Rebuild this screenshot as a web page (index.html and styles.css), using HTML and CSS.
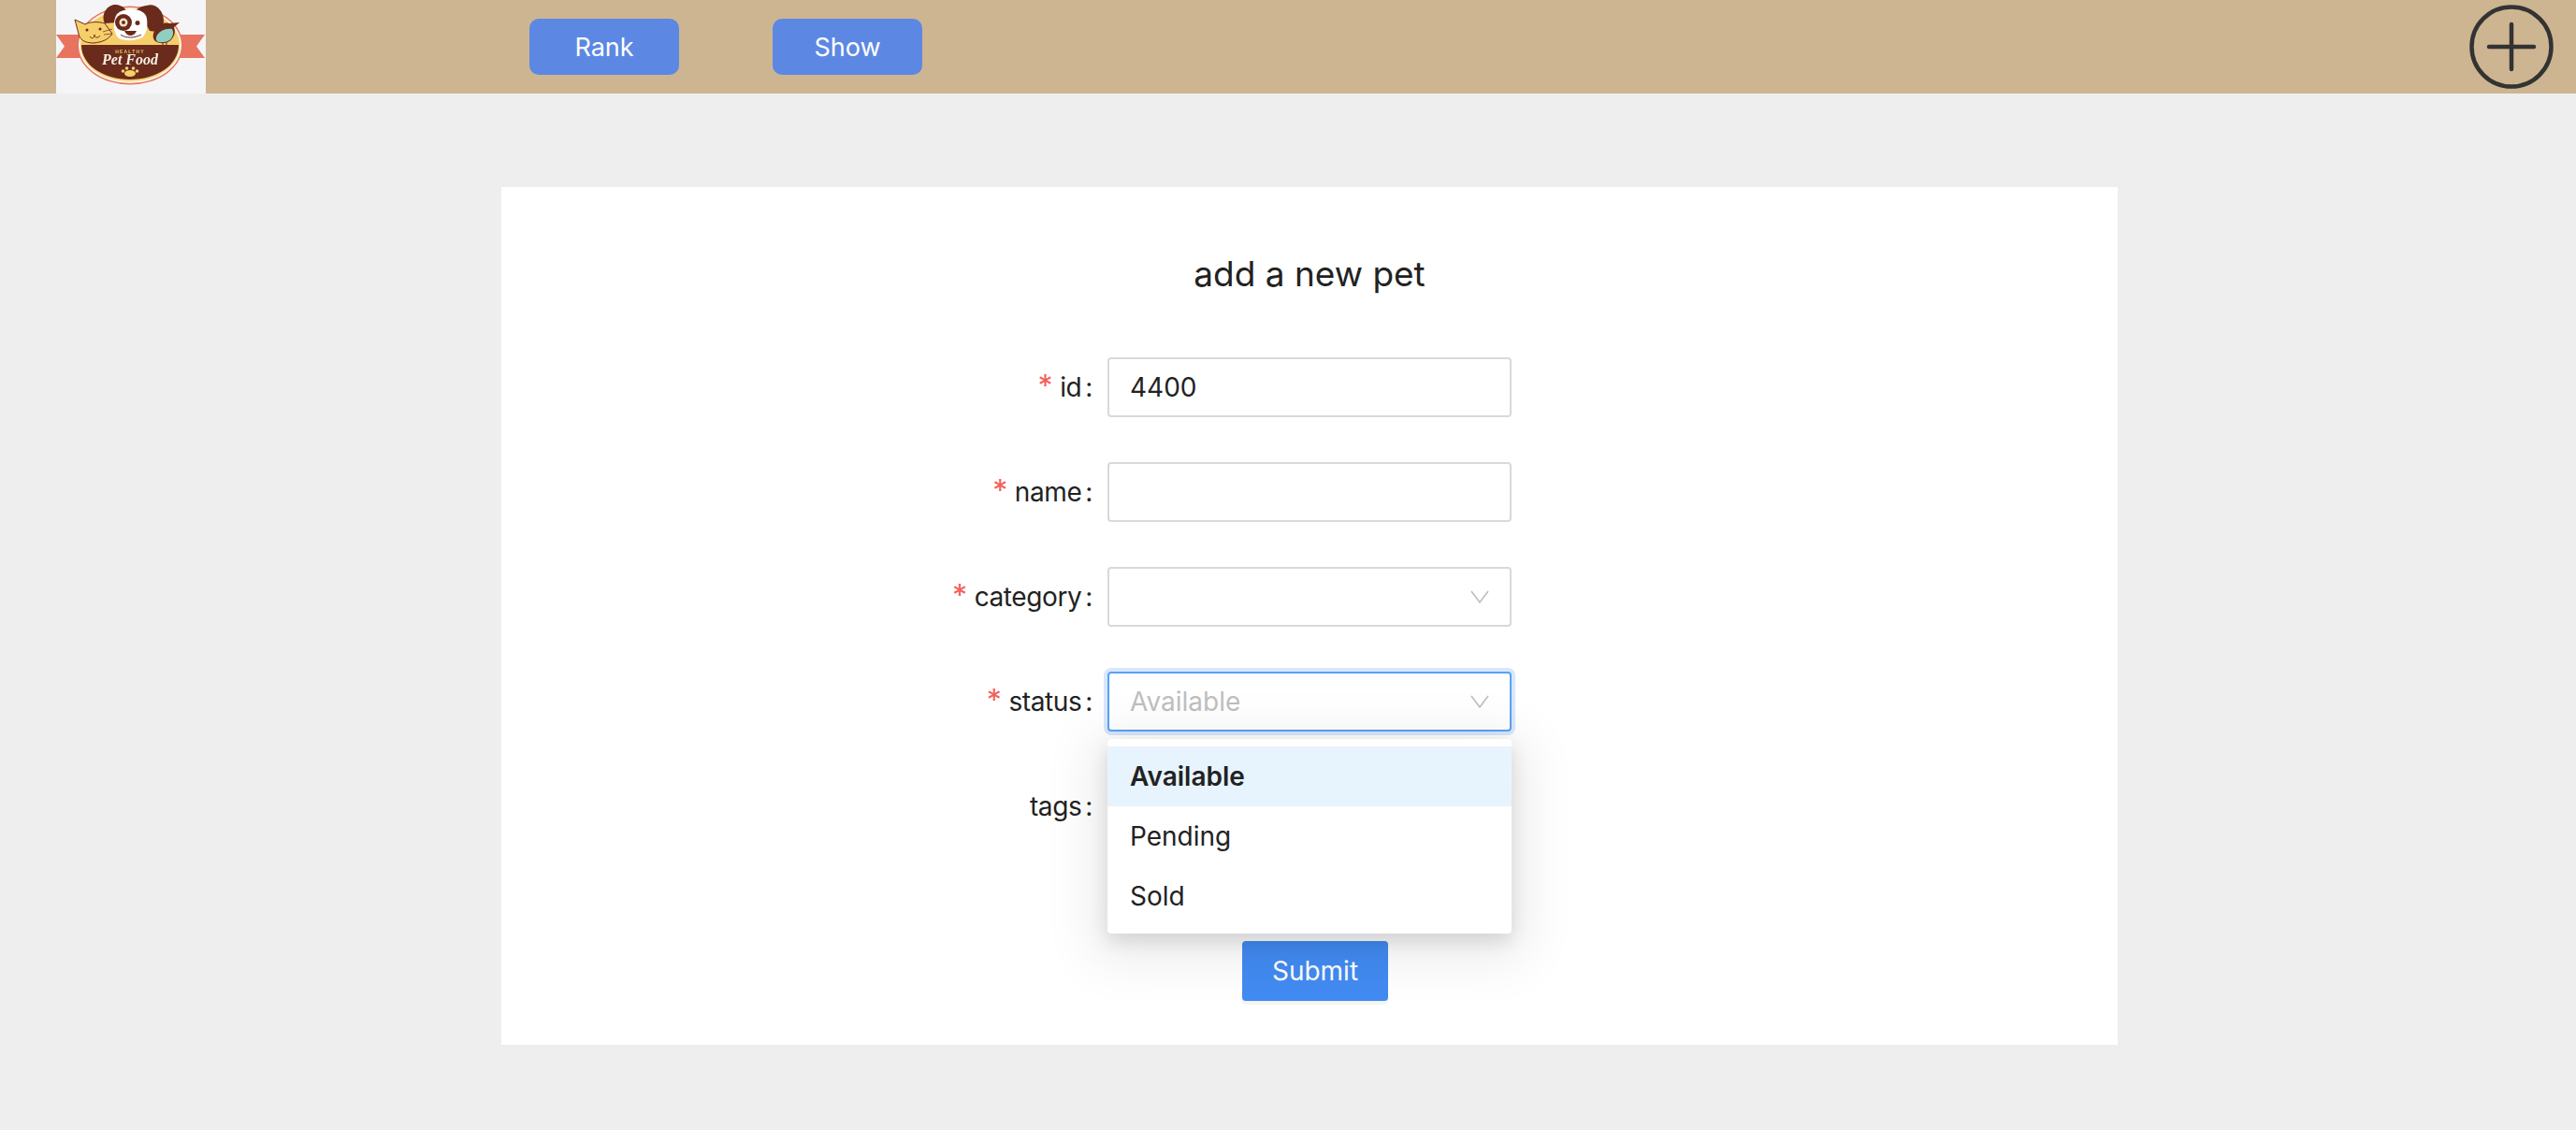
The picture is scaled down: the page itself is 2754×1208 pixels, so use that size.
FILE: index.html
```html
<!DOCTYPE html>
<html lang="en">
<head>
    <meta charset="UTF-8">
    <meta name="viewport" content="width=device-width, initial-scale=1.0">
    <title>Pet Store</title>
    <link rel="stylesheet" href="styles.css">
</head>
<body>
    <header class="top-bar">
        <svg class="logo" viewBox="0 0 160 100" aria-label="Healthy Pet Food">
            <defs>
                <filter id="soft"><feGaussianBlur stdDeviation="0.4"/></filter>
            </defs>
            <rect width="160" height="100" fill="#f5f5f7"/>
            <g filter="url(#soft)">
                <path d="M0 37H30V62H0L9 49.500Z" fill="#e8735f"/>
                <path d="M130 37H159L150 49.500L159 62H130Z" fill="#e8735f"/>
                <ellipse cx="79" cy="48.500" rx="56.500" ry="42" fill="#e8735f"/>
                <ellipse cx="79" cy="48.500" rx="55" ry="40.500" fill="#fbf3e3"/>
                <ellipse cx="79" cy="48.500" rx="53" ry="38.500" fill="#f5cf6b"/>
                <path d="M27 48H131C131 70 107 85 79 85C51 85 27 70 27 48Z" fill="#6b2c1b"/>
                <!-- dog -->
                <path d="M52 25C48 18 52 8 60 5.500C66 4 72 7 75 11L66 24Z" fill="#6b2c1b"/>
                <path d="M100 33C108 35 115 30 115 22C115 12 107 4 99 5.500C93 6 88 8 85 11L94 22Z" fill="#6b2c1b"/>
                <path d="M65 15C69 11 75 10 81 10C89 10 96 13 97 20C98 28 97 36 92 40C86 44 72 44 67 41C61 36 60 23 65 15Z" fill="#fff"/>
                <ellipse cx="72" cy="24" rx="9" ry="9" fill="#6b2c1b"/>
                <ellipse cx="72" cy="24" rx="4.500" ry="4.500" fill="#f2e3c6"/>
                <circle cx="72" cy="24" r="2" fill="#6b2c1b"/>
                <circle cx="87" cy="24.500" r="2.500" fill="#6b2c1b"/>
                <path d="M73 33H86C85 36 82 38 79.500 38C77 38 74 36 73 33Z" fill="#6b2c1b"/>
                <path d="M69 37C74 41 84 41 91 37" fill="none" stroke="#6b2c1b" stroke-width="1"/>
                <!-- cat -->
                <path d="M20 21L31 26C36 23 46 23 52 25L60 36C56 42 50 45 40 46C30 46 25 42 24 36Z" fill="#f5cf6b" stroke="#6b2c1b" stroke-width="1"/>
                <circle cx="33" cy="32" r="1.500" fill="#6b2c1b"/>
                <circle cx="47" cy="31" r="1.500" fill="#6b2c1b"/>
                <path d="M36 39C38 42 41 41 41 37C41 41 45 41 47 38" fill="none" stroke="#6b2c1b" stroke-width="1"/>
                <path d="M50 34L60 31M51 37L60 36" stroke="#6b2c1b" stroke-width="0.700"/>
                <!-- bird -->
                <path d="M104 36C106 28 113 23 121 25L132 24L126 29C129 36 124 45 116 46C109 47 102 44 104 36Z" fill="#6b2c1b"/>
                <path d="M107 40C109 33 118 30 124 31C127 36 124 44 116 45C111 46 106 45 107 40Z" fill="#8ecfc0"/>
                <path d="M114 45V48M118 45V48" stroke="#6b2c1b" stroke-width="1"/>
                <!-- label -->
                <text class="logo-small" x="79" y="56.500" text-anchor="middle">HEALTHY</text>
                <text class="logo-name" x="79" y="68.500" text-anchor="middle">Pet Food</text>
                <g fill="#f5cf6b">
                    <ellipse cx="79" cy="78.500" rx="6" ry="3.500"/>
                    <circle cx="71.500" cy="76" r="1.800"/>
                    <circle cx="75.500" cy="73" r="1.800"/>
                    <circle cx="82.500" cy="73" r="1.800"/>
                    <circle cx="86.500" cy="76" r="1.800"/>
                </g>
            </g>
        </svg>
        <nav class="nav-btns">
            <button class="nav-btn">Rank</button>
            <button class="nav-btn">Show</button>
        </nav>
        <svg class="add-icon" viewBox="0 0 90 90">
            <circle cx="45" cy="45" r="42.500" fill="none" stroke="#333" stroke-width="4.500"/>
            <path d="M45 21V69M21 45H69" fill="none" stroke="#333" stroke-width="4.500" stroke-linecap="round"/>
        </svg>
    </header>

    <main class="page">
        <section class="card">
            <h1 class="card-title">add a new pet</h1>
            <form class="pet-form">
                <div class="form-row">
                    <label class="form-label"><span class="required">*</span>id</label>
                    <div class="field"><span class="field-value">4400</span></div>
                </div>
                <div class="form-row">
                    <label class="form-label"><span class="required">*</span>name</label>
                    <div class="field"></div>
                </div>
                <div class="form-row">
                    <label class="form-label"><span class="required">*</span>category</label>
                    <div class="field">
                        <svg class="chevron" viewBox="0 0 20 20"><path d="M1 4L10 16L19 4" fill="none" stroke="#bdbdbd" stroke-width="1.600"/></svg>
                    </div>
                </div>
                <div class="form-row">
                    <label class="form-label"><span class="required">*</span>status</label>
                    <div class="select-wrap">
                        <div class="field field-focus">
                            <span class="field-placeholder">Available</span>
                            <svg class="chevron" viewBox="0 0 20 20"><path d="M1 4L10 16L19 4" fill="none" stroke="#bdbdbd" stroke-width="1.600"/></svg>
                        </div>
                        <ul class="dropdown">
                            <li class="dropdown-item active">Available</li>
                            <li class="dropdown-item">Pending</li>
                            <li class="dropdown-item">Sold</li>
                        </ul>
                    </div>
                </div>
                <div class="form-row">
                    <label class="form-label">tags</label>
                    <div class="field"></div>
                </div>
                <div class="form-actions">
                    <button type="button" class="submit-btn">Submit</button>
                </div>
            </form>
        </section>
    </main>
</body>
</html>
```

FILE: styles.css
```css
* {
    box-sizing: border-box;
}
body {
    font-family: Inter, "Noto Sans", sans-serif;
    font-size: 28px;
    margin: 0;
    padding: 0;
    min-height: 100vh;
    background-color: #eeeeee;
    color: #222;
}
.top-bar {
    display: flex;
    align-items: center;
    height: 100px;
    padding-left: 60px;
    padding-right: 24px;
    background-color: #cdb591;
}
.logo {
    width: 160px;
    height: 100px;
    flex: none;
}
.logo-small {
    font-family: "Liberation Sans", sans-serif;
    font-size: 5px;
    font-weight: bold;
    letter-spacing: 1.200px;
    fill: #e6c566;
}
.logo-name {
    font-family: "Liberation Serif", serif;
    font-size: 16px;
    font-weight: bold;
    font-style: italic;
    fill: #f7efe2;
}
.nav-btns {
    display: flex;
    gap: 100px;
    margin-left: 346px;
}
.nav-btn {
    width: 160px;
    height: 60px;
    border: none;
    border-radius: 10px;
    background-color: #5c88e3;
    color: #fff;
    font-family: inherit;
    font-size: 27px;
}
.add-icon {
    width: 90px;
    height: 90px;
    margin-left: auto;
}
.page {
    padding-top: 100px;
}
.card {
    width: 1728px;
    height: 917px;
    margin-left: 536px;
    padding-top: 69px;
    background-color: #fff;
}
.card-title {
    margin: 0 0 65px;
    text-align: center;
    font-size: 37px;
    font-weight: 400;
    line-height: 48px;
}
.pet-form {
    display: flex;
    flex-direction: column;
    gap: 48px;
}
.form-row {
    display: flex;
    align-items: center;
}
.form-label {
    width: 648px;
    padding-right: 16px;
    text-align: right;
    letter-spacing: -0.4px;
}
.form-label::after {
    content: ":";
    margin-left: 4px;
}
.required {
    margin-right: 8px;
    color: #f25f5c;
    font-size: 32px;
    line-height: 1;
}
.select-wrap {
    position: relative;
}
.field {
    display: flex;
    align-items: center;
    width: 432px;
    height: 64px;
    padding: 0 22px;
    border: 2px solid #d9d9d9;
    border-radius: 4px;
    background: #fff;
}
.field-focus {
    border-color: #5aa2f5;
    box-shadow: 0 0 0 4px #d8e7fc;
}
.field-placeholder {
    color: #bfbfbf;
}
.chevron {
    width: 20px;
    height: 20px;
    margin-left: auto;
    margin-right: 0;
}
.dropdown {
    position: absolute;
    top: 72px;
    left: 0;
    width: 432px;
    margin: 0;
    padding: 8px 0;
    list-style: none;
    background: #fff;
    border-radius: 4px;
    box-shadow: 0 12px 56px 16px rgba(0, 0, 0, 0.08), 0 8px 20px rgba(0, 0, 0, 0.12);
}
.dropdown-item {
    height: 64px;
    padding: 0 24px;
    line-height: 64px;
}
.dropdown-item.active {
    font-weight: 600;
    background-color: #e7f4fe;
}
.form-actions {
    margin-top: 64px;
    padding-left: 792px;
}
.submit-btn {
    width: 156px;
    height: 64px;
    border: none;
    border-radius: 4px;
    background-color: #428bf2;
    box-shadow: 0 4px 0 #f5f5f5;
    color: #fff;
    font-family: inherit;
    font-size: 28px;
}
```
